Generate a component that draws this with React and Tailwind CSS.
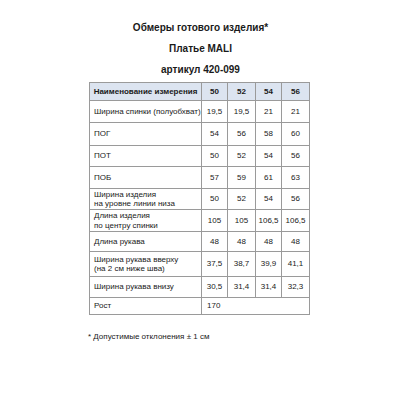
import React from 'react';

const sizes = ['50', '52', '54', '56'];

const rows = [
  { name: ['Ширина спинки (полуобхват)'], vals: ['19,5', '19,5', '21', '21'], h: 'h-[22px]' },
  { name: ['ПОГ'], vals: ['54', '56', '58', '60'], h: 'h-[23px]' },
  { name: ['ПОТ'], vals: ['50', '52', '54', '56'], h: 'h-[21px]' },
  { name: ['ПОБ'], vals: ['57', '59', '61', '63'], h: 'h-[22px]' },
  { name: ['Ширина изделия', 'на уровне линии низа'], vals: ['50', '52', '54', '56'], h: 'h-[21px]' },
  { name: ['Длина изделия', 'по центру спинки'], vals: ['105', '105', '106,5', '106,5'], h: 'h-[22px]' },
  { name: ['Длина рукава'], vals: ['48', '48', '48', '48'], h: 'h-[20px]' },
  { name: ['Ширина рукава вверху', '(на 2 см ниже шва)'], vals: ['37,5', '38,7', '39,9', '41,1'], h: 'h-[25px]' },
  { name: ['Ширина рукава внизу'], vals: ['30,5', '31,4', '31,4', '32,3'], h: 'h-[21px]' },
];

const cell = 'border border-[#9a9a9a] p-0';

export default function App() {
  return (
    <div className="w-[400px] h-[400px] bg-white text-[#1a1a1a] font-['Liberation_Sans',Arial,sans-serif]">
      {/* Titles */}
      <div className="flex flex-col items-center pt-[21px] font-bold text-[10px] leading-[13px] gap-[8px] pl-[1px]">
        <p>Обмеры готового изделия*</p>
        <p>Платье MALI</p>
        <p>артикул 420-099</p>
      </div>

      {/* Table */}
      <table className="ml-[89px] mt-[6px] border-collapse table-fixed w-[220px] text-[8px] leading-[9.5px]">
        <colgroup>
          <col className="w-[112px]" />
          <col className="w-[26px]" />
          <col className="w-[28px]" />
          <col className="w-[26px]" />
          <col className="w-[28px]" />
        </colgroup>
        <thead>
          <tr className="h-[18px] bg-[#dce4f0] font-bold">
            <th className={`${cell} text-center`}>Наименование измерения</th>
            {sizes.map((s) => (
              <th key={s} className={`${cell} text-center`}>{s}</th>
            ))}
          </tr>
        </thead>
        <tbody>
          {rows.map((r, i) => (
            <tr key={i} className={r.h}>
              <td className={`${cell} pl-[4px] text-left`}>
                {r.name.map((line, j) => (
                  <div key={j}>{line}</div>
                ))}
              </td>
              {r.vals.map((v, j) => (
                <td key={j} className={`${cell} text-center`}>{v}</td>
              ))}
            </tr>
          ))}
          <tr className="h-[17px]">
            <td className={`${cell} pl-[4px] text-left`}>Рост</td>
            <td colSpan={4} className={`${cell} pl-[5px] text-left`}>170</td>
          </tr>
        </tbody>
      </table>

      <p className="ml-[88px] mt-[17px] text-[8px] leading-[10px]">* Допустимые отклонения ± 1 см</p>
    </div>
  );
}
